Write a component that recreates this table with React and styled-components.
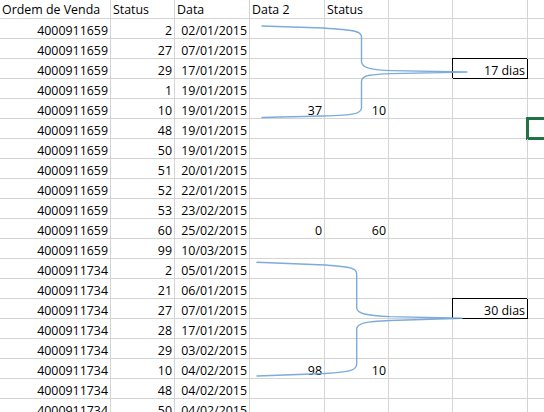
import React from "react";
import styled, { createGlobalStyle, css } from "styled-components";

const Global = createGlobalStyle`
  html, body {
    margin: 0;
    padding: 0;
    background: #ffffff;
    overflow: hidden;
  }
  body {
    font-family: "Open Sans", "Liberation Sans", sans-serif;
    color: #000000;
  }
`;

const Sheet = styled.div`
  position: relative;
  width: 544px;
  height: 412px;
  overflow: hidden;
  display: grid;
  grid-template-columns: 111px 64px 75px 75px 64px 64px 75px 80px;
  grid-auto-rows: 20px;
  grid-template-rows: 19px;
`;

const Cell = styled.div`
  position: relative;
  box-sizing: border-box;
  border-right: 1px solid #d4d4d4;
  border-bottom: 1px solid #d4d4d4;
  padding: ${(p) => (p.$header ? "2px" : "4px")} 2px 0 2px;
  font-size: 12.4px;
  line-height: 15px;
  white-space: nowrap;
  text-align: ${(p) => (p.$right ? "right" : "left")};
  color: #000;

  ${(p) =>
    p.$boxed &&
    css`
      border-right-color: #000;
      border-bottom-color: #000;
      box-shadow: -1px -1px 0 0 #000;
    `}

  ${(p) =>
    p.$selected &&
    css`
      &::after {
        content: "";
        position: absolute;
        left: -2px;
        top: -2px;
        right: -4px;
        bottom: -2px;
        border: 3px solid #217346;
      }
    `}
`;

const Overlay = styled.svg`
  position: absolute;
  left: 0;
  top: 0;
  width: 544px;
  height: 412px;
  pointer-events: none;
`;

const headers = ["Ordem de Venda", "Status", "Data", "Data 2", "Status", "", "", ""];

const rows = [
  ["4000911659", "2", "02/01/2015"],
  ["4000911659", "27", "07/01/2015"],
  ["4000911659", "29", "17/01/2015", "", "", "", "17 dias"],
  ["4000911659", "1", "19/01/2015"],
  ["4000911659", "10", "19/01/2015", "37", "10"],
  ["4000911659", "48", "19/01/2015"],
  ["4000911659", "50", "19/01/2015"],
  ["4000911659", "51", "20/01/2015"],
  ["4000911659", "52", "22/01/2015"],
  ["4000911659", "53", "23/02/2015"],
  ["4000911659", "60", "25/02/2015", "0", "60"],
  ["4000911659", "99", "10/03/2015"],
  ["4000911734", "2", "05/01/2015"],
  ["4000911734", "21", "06/01/2015"],
  ["4000911734", "27", "07/01/2015", "", "", "", "30 dias"],
  ["4000911734", "28", "17/01/2015"],
  ["4000911734", "29", "03/02/2015"],
  ["4000911734", "10", "04/02/2015", "98", "10"],
  ["4000911734", "48", "04/02/2015"],
  ["4000911734", "50", "04/02/2015"],
  ["4000911734", "51", "04/02/2015"],
];

const Brace = ({ d }) => (
  <path
    d={d}
    fill="none"
    stroke="#6ea2d8"
    strokeWidth="1.4"
    strokeLinejoin="round"
    strokeLinecap="round"
    opacity="0.9"
  />
);

export default function App() {
  return (
    <>
      <Global />
      <Sheet>
        {headers.map((h, i) => (
          <Cell key={`h${i}`} $header>
            {h}
          </Cell>
        ))}
        {rows.map((r, ri) =>
          Array.from({ length: 8 }).map((_, ci) => {
            const v = r[ci] || "";
            const boxed = ci === 6 && v !== "";
            const selected = ri === 5 && ci === 7;
            return (
              <Cell key={`${ri}-${ci}`} $right $boxed={boxed} $selected={selected}>
                {v}
              </Cell>
            );
          })
        )}
        <Overlay viewBox="0 0 544 412">
          <Brace d="M262,26 L323,28 C354,30 361.5,31 361.5,37 L361.5,62 C362,68 372,70 392,70.6 L467,72 L392,73.6 C372,74.2 362,75 361.5,81 L361.5,108 C361,114 354,115 323,116 L262,117.5" />
          <Brace d="M257,262.3 L325,265 C352,267 356.7,268.5 356.7,274 L356.7,308 C357,313.5 366,315.5 390,316.6 L462,318.3 L390,320.5 C366,321.5 357,323 356.7,329 L356.7,364 C356.5,370.5 350,372 325,373.5 L257,376" />
        </Overlay>
      </Sheet>
    </>
  );
}
